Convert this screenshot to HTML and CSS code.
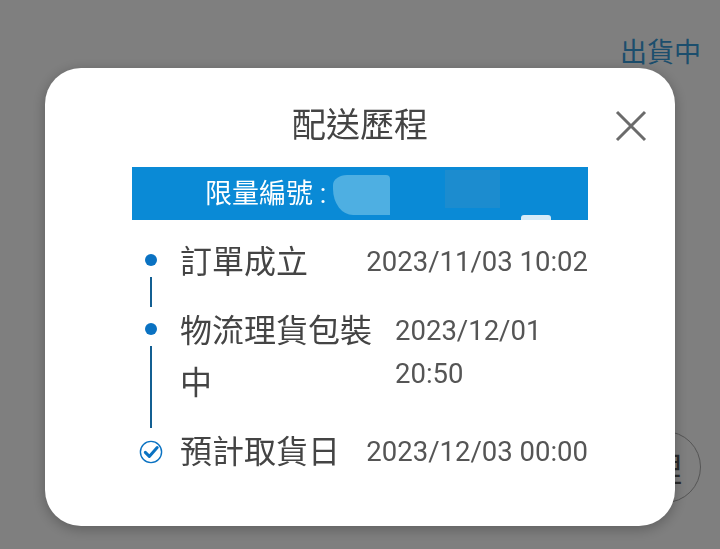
FILE: index.html
```html
<!DOCTYPE html>
<html lang="zh-Hant">
<head>
    <meta charset="UTF-8">
    <meta name="viewport" content="width=device-width, initial-scale=1.0">
    <title>配送歷程</title>
    <link rel="stylesheet" href="styles.css">
</head>
<body>
    <div class="page">
        <div class="status">出貨中</div>
        <div class="round-btn">理</div>
    </div>

    <div class="overlay">
        <div class="modal">
            <div class="modal-head">
                <span></span>
                <h2 class="modal-title">配送歷程</h2>
                <button class="close" aria-label="關閉">
                    <svg width="32" height="32" viewBox="0 0 32 32">
                        <path d="M2 2 L30 30 M30 2 L2 30" stroke="#6b6b6b" stroke-width="3" fill="none"/>
                    </svg>
                </button>
            </div>

            <div class="banner">
                <span class="banner-text">限量編號 :</span>
                <span class="mask mask-a"></span>
                <span class="mask mask-b"></span>
                <span class="mask mask-c"></span>
            </div>

            <ul class="timeline">
                <li class="step">
                    <div class="marker"><span class="dot"></span><span class="line"></span></div>
                    <div class="step-body">
                        <span class="label">訂單成立</span>
                        <span class="time">2023/11/03 10:02</span>
                    </div>
                </li>
                <li class="step">
                    <div class="marker"><span class="dot"></span><span class="line"></span></div>
                    <div class="step-body">
                        <span class="label">物流理貨包裝中</span>
                        <span class="time">2023/12/01 20:50</span>
                    </div>
                </li>
                <li class="step">
                    <div class="marker">
                        <svg class="check" width="24" height="24" viewBox="0 0 24 24">
                            <circle cx="12" cy="12" r="10.6" stroke="#0a72c2" stroke-width="1.4" fill="none"/>
                            <path d="M6.3 12.4 L10.3 16.4 L18.2 7.6" stroke="#0a72c2" stroke-width="3" fill="none" stroke-linecap="round" stroke-linejoin="round"/>
                        </svg>
                    </div>
                    <div class="step-body">
                        <span class="label">預計取貨日</span>
                        <span class="time">2023/12/03 00:00</span>
                    </div>
                </li>
            </ul>
        </div>
    </div>
</body>
</html>
```

FILE: styles.css
```css
body {
    margin: 0;
    padding: 0;
    height: 100vh;
    background-color: #fff;
    font-family: Roboto, "Noto Sans CJK TC", sans-serif;
    overflow: hidden;
}
.page {
    position: relative;
    height: 100vh;
    padding-top: 34px;
    box-sizing: border-box;
}
.status {
    text-align: right;
    padding-right: 19px;
    font-size: 27px;
    line-height: 38px;
    color: #389cda;
}
.round-btn {
    position: absolute;
    left: 629px;
    top: 431px;
    width: 70px;
    height: 70px;
    border: 1px solid #aaa;
    border-radius: 50%;
    display: flex;
    justify-content: center;
    align-items: center;
    font-size: 34px;
    color: #555;
}
.overlay {
    position: fixed;
    inset: 0;
    background: rgba(0, 0, 0, 0.5);
    display: flex;
    justify-content: center;
    align-items: flex-start;
    padding-top: 68px;
}
.modal {
    width: 630px;
    background: #fff;
    border-radius: 36px;
    padding: 35px 0 48px;
    box-shadow: 0 3px 14px rgba(0, 0, 0, 0.28);
}
.modal-head {
    display: grid;
    grid-template-columns: 1fr auto 1fr;
    align-items: center;
    padding: 0 28px;
    margin-bottom: 20px;
}
.modal-title {
    margin: 0;
    font-size: 34px;
    line-height: 44px;
    font-weight: normal;
    color: #444;
}
.close {
    justify-self: end;
    border: none;
    background: none;
    padding: 0;
    width: 32px;
    height: 32px;
    margin-top: 2px;
    cursor: pointer;
}
.close svg {
    display: block;
}
.banner {
    position: relative;
    margin: 0 87px;
    height: 53px;
    background-color: #0a8ad6;
    display: flex;
    align-items: center;
    padding-left: 73px;
    overflow: hidden;
}
.banner-text {
    color: #fff;
    font-size: 27px;
    line-height: 36px;
}
.mask {
    position: absolute;
}
.mask-a {
    left: 201px;
    top: 8px;
    width: 57px;
    height: 40px;
    background: #4eafe2;
    border-radius: 14px 4px 0 20px / 10px 4px 0 26px;
}
.mask-b {
    left: 313px;
    top: 3px;
    width: 55px;
    height: 38px;
    background: #1c8ccf;
}
.mask-c {
    left: 389px;
    top: 48px;
    width: 30px;
    height: 5px;
    background: #d6ebf8;
    border-radius: 3px 3px 0 0;
}
.timeline {
    list-style: none;
    margin: 16px 87px 0;
    padding: 0;
}
.step {
    display: flex;
    padding-bottom: 17px;
}
.step:last-child {
    padding-bottom: 0;
}
.marker {
    width: 38px;
    flex-shrink: 0;
    display: flex;
    flex-direction: column;
    align-items: center;
}
.dot {
    width: 12px;
    height: 12px;
    margin-top: 18px;
    border-radius: 50%;
    background-color: #0a72c2;
}
.line {
    flex: 1;
    width: 2px;
    margin-top: 11px;
    margin-bottom: -19px;
    background-color: #135f92;
}
.check {
    margin-top: 14px;
    display: block;
}
.step-body {
    flex: 1;
    display: flex;
    justify-content: space-between;
    align-items: flex-start;
    gap: 20px;
    margin-left: 10px;
}
.label {
    flex: 0 1 auto;
    font-size: 32px;
    line-height: 52px;
    color: #444;
}
.time {
    flex: 0 1 auto;
    font-size: 27.5px;
    line-height: 43px;
    margin-top: 4px;
    color: #555;
}
```
